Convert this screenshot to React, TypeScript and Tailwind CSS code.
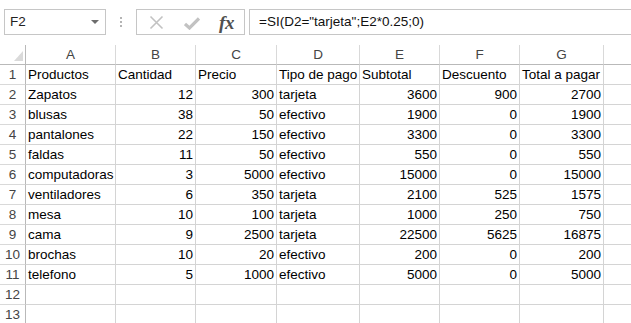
import React from "react";

type Row = [string, string, string, string, string, string, string];

const columns = ["A", "B", "C", "D", "E", "F", "G"];

const rows: Row[] = [
  ["Productos", "Cantidad", "Precio", "Tipo de pago", "Subtotal", "Descuento", "Total a pagar"],
  ["Zapatos", "12", "300", "tarjeta", "3600", "900", "2700"],
  ["blusas", "38", "50", "efectivo", "1900", "0", "1900"],
  ["pantalones", "22", "150", "efectivo", "3300", "0", "3300"],
  ["faldas", "11", "50", "efectivo", "550", "0", "550"],
  ["computadoras", "3", "5000", "efectivo", "15000", "0", "15000"],
  ["ventiladores", "6", "350", "tarjeta", "2100", "525", "1575"],
  ["mesa", "10", "100", "tarjeta", "1000", "250", "750"],
  ["cama", "9", "2500", "tarjeta", "22500", "5625", "16875"],
  ["brochas", "10", "20", "efectivo", "200", "0", "200"],
  ["telefono", "5", "1000", "efectivo", "5000", "0", "5000"],
  ["", "", "", "", "", "", ""],
  ["", "", "", "", "", "", ""],
];

const isNumber = (v: string) => /^\d+$/.test(v);

const FormulaBar: React.FC = () => (
  <div className="h-[45px] pt-[9px] flex items-start">
    {/* Name box */}
    <div className="ml-[4px] w-[102px] h-[26px] border border-[#c6c6c6] flex items-center justify-between pl-[5px] pr-[6px] pt-[1px] text-[13.5px] text-[#222]">
      <span>F2</span>
      <svg width="8" height="5" viewBox="0 0 8 5">
        <path d="M0 0 L8 0 L4 4 Z" fill="#6d6d6d" />
      </svg>
    </div>

    {/* grip dots */}
    <div className="w-[30px] h-[26px] flex flex-col items-center justify-center gap-[2px]">
      <div className="w-[2px] h-[2px] bg-[#b4b4b4]" />
      <div className="w-[2px] h-[2px] bg-[#b4b4b4]" />
      <div className="w-[2px] h-[2px] bg-[#b4b4b4]" />
    </div>

    {/* cancel / enter / fx */}
    <div className="w-[109px] h-[26px] border border-[#c6c6c6] flex items-center">
      <div className="w-[36px] flex justify-center pl-[2px]">
        <svg width="15" height="15" viewBox="0 0 15 15">
          <path d="M1.5 1.5 L13.5 13.5 M13.5 1.5 L1.5 13.5" stroke="#c2c2c2" strokeWidth="1.6" />
        </svg>
      </div>
      <div className="w-[38px] flex justify-center pt-[2px]">
        <svg width="16" height="13" viewBox="0 0 16 13">
          <path d="M1 7 L5.5 11 L15 1.5" stroke="#c2c2c2" strokeWidth="3.2" fill="none" />
        </svg>
      </div>
      <div className="flex-1 flex justify-center pr-[2px]">
        <span className="font-['Liberation_Serif'] italic font-bold text-[19px] leading-none text-[#505050] tracking-[-0.5px]">
          fx
        </span>
      </div>
    </div>

    {/* formula box */}
    <div className="ml-[4px] flex-1 h-[26px] border-y border-l border-[#c6c6c6] flex items-center pl-[9px] pt-[1px] text-[13.5px] text-[#111] whitespace-nowrap">
      =SI(D2="tarjeta";E2*0.25;0)
    </div>
  </div>
);

const Sheet: React.FC = () => (
  <div className="grid grid-cols-[26px_90px_80px_81px_83px_80px_80px_84px_1fr] text-[13.5px]">
    {/* corner */}
    <div className="h-[20px] border-r border-b border-[#b9b9b9] flex items-end justify-end pr-[2px] pb-[3px]">
      <svg width="9" height="10" viewBox="0 0 9 10">
        <path d="M9 0 L9 10 L0 10 Z" fill="#dadada" />
      </svg>
    </div>
    {columns.map((c) => (
      <div
        key={c}
        className="h-[20px] border-r border-b border-r-[#d9d9d9] border-b-[#b9b9b9] flex items-center justify-center pt-[1px] text-[#444]"
      >
        {c}
      </div>
    ))}
    <div className="h-[20px] border-b border-[#b9b9b9]" />

    {rows.map((row, i) => (
      <React.Fragment key={i}>
        <div className="h-[20px] border-r border-b border-r-[#b9b9b9] border-b-[#d9d9d9] flex items-center justify-center pt-[2px] text-[#444]">
          {i + 1}
        </div>
        {row.map((v, j) => (
          <div
            key={j}
            className={
              isNumber(v)
                ? "h-[20px] border-r border-b border-[#d4d4d4] flex items-center justify-end pr-[2px] pt-[2px] text-black whitespace-nowrap"
                : "h-[20px] border-r border-b border-[#d4d4d4] flex items-center pl-[2px] pt-[2px] text-black whitespace-nowrap"
            }
          >
            {v}
          </div>
        ))}
        <div className="h-[20px] border-b border-[#d4d4d4]" />
      </React.Fragment>
    ))}
  </div>
);

export default function App() {
  return (
    <div className="w-[631px] h-[323px] overflow-hidden bg-white font-['Liberation_Sans',Arial,sans-serif]">
      <FormulaBar />
      <Sheet />
    </div>
  );
}
